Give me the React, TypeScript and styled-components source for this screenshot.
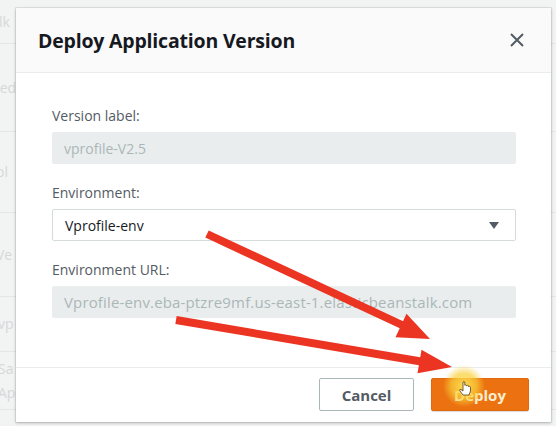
import React from "react";
import styled, { createGlobalStyle } from "styled-components";

const GlobalStyle = createGlobalStyle`
  * { box-sizing: border-box; }
  html, body { margin: 0; padding: 0; }
  body {
    background: #f2f3f3;
    font-family: "Open Sans", "Liberation Sans", sans-serif;
    -webkit-font-smoothing: antialiased;
  }
`;

const Page = styled.div`
  position: relative;
  width: 556px;
  height: 426px;
  overflow: hidden;
  background: #f2f3f3;
`;

const BgTable = styled.div`
  display: flex;
  flex-direction: column;
`;

const BgRow = styled.div<{ $h: number }>`
  height: ${(p) => p.$h}px;
  border-bottom: 1px solid #e4e6e6;
  display: flex;
  flex-direction: column;
  justify-content: center;
  font-size: 14px;
  line-height: 24px;
  color: #d6d8d8;
  white-space: nowrap;
`;

const BgText = styled.span<{ $shift: number }>`
  margin-left: ${(p) => p.$shift}px;
`;

const Modal = styled.div`
  position: absolute;
  left: 16px;
  top: 8px;
  width: 535px;
  height: 414px;
  background: #ffffff;
  box-shadow: 0 1px 3px rgba(0, 0, 0, 0.25), 0 0 0 1px rgba(0, 0, 0, 0.06);
  display: flex;
  flex-direction: column;
`;

const Header = styled.div`
  height: 65px;
  flex: none;
  background: #fafafa;
  border-bottom: 1px solid #eaeded;
  display: flex;
  align-items: center;
  justify-content: space-between;
  padding: 0 26px 0 22px;
`;

const Title = styled.h2`
  margin: 0;
  font-family: "Open Sans", sans-serif;
  font-weight: 700;
  font-size: 19.5px;
  letter-spacing: -0.2px;
  color: #16191f;
`;

const CloseButton = styled.button`
  border: none;
  background: none;
  padding: 0;
  width: 16px;
  height: 16px;
  display: flex;
  align-items: center;
  justify-content: center;
  color: #545b64;
`;

const Body = styled.div`
  flex: 1;
  padding: 33px 35px 0 36px;
  display: flex;
  flex-direction: column;
  gap: 19px;
`;

const Field = styled.div`
  display: flex;
  flex-direction: column;
  gap: 6px;
`;

const Label = styled.label`
  font-size: 14px;
  line-height: 20px;
  color: #545b64;
`;

const ReadOnlyBox = styled.div<{ $size?: number; $spacing?: number }>`
  height: 32px;
  background: #eaeded;
  border-radius: 2px;
  padding: 0 12px;
  display: flex;
  align-items: center;
  font-size: ${(p) => p.$size ?? 14}px;
  letter-spacing: ${(p) => p.$spacing ?? 0}px;
  color: #aab7b8;
  white-space: nowrap;
`;

const SelectBox = styled.div`
  height: 32px;
  background: #ffffff;
  border: 1px solid #d5dbdb;
  border-radius: 2px;
  padding: 0 16px 0 12px;
  display: flex;
  align-items: center;
  justify-content: space-between;
  font-size: 14px;
  color: #16191f;
`;

const Caret = styled.span`
  width: 0;
  height: 0;
  border-left: 5px solid transparent;
  border-right: 5px solid transparent;
  border-top: 7px solid #545b64;
`;

const Footer = styled.div`
  height: 55px;
  flex: none;
  border-top: 1px solid #eaeded;
  display: flex;
  align-items: flex-start;
  justify-content: flex-end;
  gap: 17px;
  padding: 10px 22px 0 0;
`;

const Button = styled.button<{ $primary?: boolean; $w: number }>`
  width: ${(p) => p.$w}px;
  height: 33px;
  border-radius: 2px;
  font-family: "Open Sans", sans-serif;
  font-weight: 700;
  font-size: 15px;
  cursor: pointer;
  border: 1px solid ${(p) => (p.$primary ? "#e0690f" : "#aab7b8")};
  background: ${(p) => (p.$primary ? "#ec7211" : "#ffffff")};
  color: ${(p) => (p.$primary ? "#fbeed0" : "#545b64")};
  box-shadow: ${(p) => (p.$primary ? "0 1px 1px rgba(0,0,0,0.15)" : "none")};
`;

const Overlay = styled.svg`
  position: absolute;
  left: 0;
  top: 0;
  width: 556px;
  height: 426px;
  pointer-events: none;
`;

const bgRows: { h: number; lines: string[]; shift: number }[] = [
  { h: 44, lines: ["lk"], shift: -1 },
  { h: 88, lines: ["red"], shift: -6 },
  { h: 81, lines: ["ol"], shift: -4 },
  { h: 84, lines: ["Ve"], shift: -4 },
  { h: 55, lines: ["vp"], shift: -2 },
  { h: 58, lines: ["Sa", "Ap"], shift: -2 },
];

const RED = "#ec3423";

export default function App() {
  return (
    <>
      <GlobalStyle />
      <Page>
        <BgTable>
          {bgRows.map((r, i) => (
            <BgRow key={i} $h={r.h}>
              {r.lines.map((t) => (
                <BgText key={t} $shift={r.shift}>
                  {t}
                </BgText>
              ))}
            </BgRow>
          ))}
        </BgTable>

        <Modal>
          <Header>
            <Title>Deploy Application Version</Title>
            <CloseButton aria-label="Close">
              <svg width="14" height="14" viewBox="0 0 14 14">
                <path d="M1 1 L13 13 M13 1 L1 13" stroke="currentColor" strokeWidth="2" />
              </svg>
            </CloseButton>
          </Header>
          <Body>
            <Field>
              <Label>Version label:</Label>
              <ReadOnlyBox>vprofile-V2.5</ReadOnlyBox>
            </Field>
            <Field>
              <Label>Environment:</Label>
              <SelectBox>
                <span>Vprofile-env</span>
                <Caret />
              </SelectBox>
            </Field>
            <Field>
              <Label>Environment URL:</Label>
              <ReadOnlyBox $size={15} $spacing={0.15}>
                Vprofile-env.eba-ptzre9mf.us-east-1.elasticbeanstalk.com
              </ReadOnlyBox>
            </Field>
          </Body>
          <Footer>
            <Button $w={95}>Cancel</Button>
            <Button $w={98} $primary>
              Deploy
            </Button>
          </Footer>
        </Modal>

        <Overlay viewBox="0 0 556 426">
          <defs>
            <radialGradient id="glow" cx="0.5" cy="0.5" r="0.5">
              <stop offset="0" stopColor="#ffe45a" stopOpacity="0.95" />
              <stop offset="0.6" stopColor="#f9cf3a" stopOpacity="0.7" />
              <stop offset="1" stopColor="#f9cf3a" stopOpacity="0" />
            </radialGradient>
          </defs>
          <line x1="207" y1="234" x2="402" y2="325" stroke={RED} strokeWidth="8" />
          <polygon points="406.5,313.7 395.5,337.3 430,339" fill={RED} />
          <line x1="176" y1="320" x2="421" y2="361.5" stroke={RED} strokeWidth="8" />
          <polygon points="421.5,349.7 417.5,373.3 452,367" fill={RED} />
          <circle cx="464" cy="386" r="21" fill="url(#glow)" />
          <path
            d="M463 382 L463 391 L461 389.5 Q459.5 389 459.8 390.8 L463 395 L469 395 L470.5 391 L470.5 387.5 Q470.5 386.5 469.5 386.5 L468.5 386.5 L468.5 385.8 Q467.5 385 466.5 385.8 L466.5 385.3 Q465.5 384.5 464.8 385.3 L464.8 382 Q464 381 463 382 Z"
            fill="#ffffff"
            stroke="#5a3a10"
            strokeWidth="0.8"
          />
        </Overlay>
      </Page>
    </>
  );
}
